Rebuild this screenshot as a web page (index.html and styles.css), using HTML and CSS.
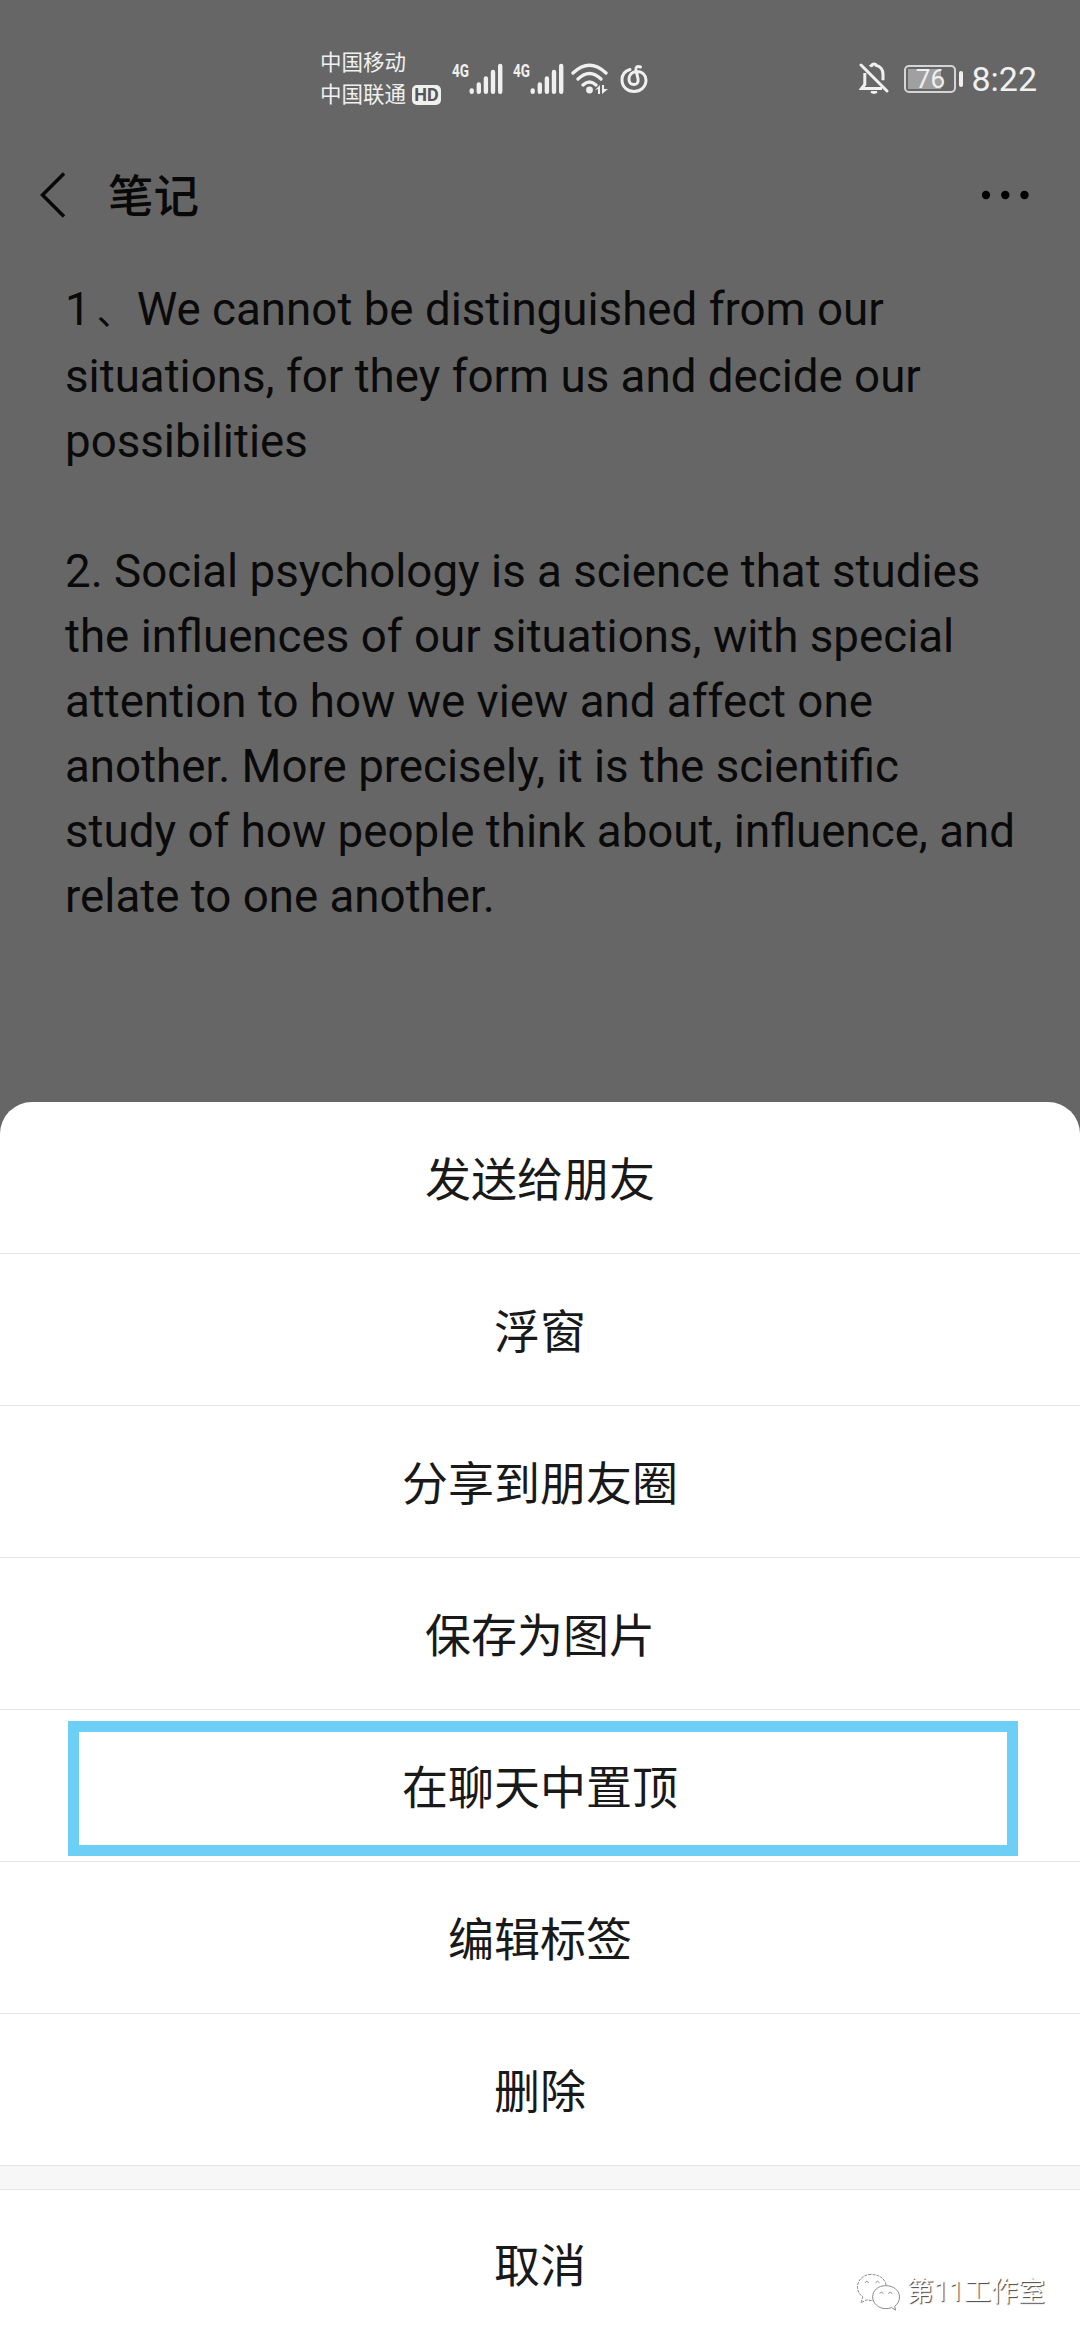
FILE: index.html
```html
<!DOCTYPE html>
<html lang="zh-CN">
<head>
    <meta charset="UTF-8">
    <meta name="viewport" content="width=device-width, initial-scale=1.0">
    <title>笔记</title>
    <link rel="stylesheet" href="styles.css">
</head>
<body>
    <div class="screen">
        <header class="status-bar">
            <div class="carriers">
                <span>中国移动</span>
                <span class="carrier-row">中国联通<b class="hd">HD</b></span>
            </div>
            <svg class="signal" width="52" height="48" viewBox="0 -6 52 48">
                <text class="network" x="1" y="16" textLength="17" lengthAdjust="spacingAndGlyphs">4G</text>
                <path d="M20.7 29.5v1.2M27.8 23.5v7.2M34.9 17.5v13.2M42 11v19.7M49.2 5v25.7" stroke="#f0f0f0" stroke-width="4.4" stroke-linecap="round"/>
            </svg>
            <svg class="signal second" width="52" height="48" viewBox="0 -6 52 48">
                <text class="network" x="1" y="16" textLength="17" lengthAdjust="spacingAndGlyphs">4G</text>
                <path d="M20.7 29.5v1.2M27.8 23.5v7.2M34.9 17.5v13.2M42 11v19.7M49.2 5v25.7" stroke="#f0f0f0" stroke-width="4.4" stroke-linecap="round"/>
            </svg>
            <svg class="wifi" width="38" height="36" viewBox="0 0 38 36" fill="none" stroke="#f0f0f0" stroke-width="3.3" stroke-linecap="round">
                <path d="M2 12Q18.500-3.500 35 12M7 18Q18.500 7 30 18M12 24Q18.500 18 25 24"/>
                <circle cx="18.500" cy="29" r="3.400" fill="#f0f0f0" stroke="none"/>
                <path d="M24 29l5-5v9h-2v-5zM31 24v9l6-5h-4v-4z" fill="#f0f0f0" stroke="none"/>
            </svg>
            <svg class="music" width="28" height="30" viewBox="0 0 28 30" fill="none" stroke="#f0f0f0" stroke-width="3" stroke-linecap="round">
                <path d="M10 5.500C4.500 7 2 11 2 16c0 7 5.500 11.500 12 11.500S26 23 26 16c0-4.500-3.500-8.500-9-8.500-5 0-8 3.500-8 8 0 3 2 5 4.800 5 3 0 4.700-2 4.300-5L16 6c-.5-3 1-4.300 4.500-3"/>
            </svg>
            <svg class="mute" width="30" height="33" viewBox="0 0 30 33" fill="none" stroke="#f0f0f0" stroke-width="3">
                <path d="M2 3l26 26" stroke-linecap="round"/>
                <path d="M11 4.500C12 3.600 12.500 3.200 13 3.200c.4-1.600 3.600-1.600 4 0 4.500 1 7 4.800 7 9v6M5.800 11v11.500l-3.300 4H23"/>
                <path d="M12 30h6l-3 1z" fill="#f0f0f0" stroke-width="2"/>
            </svg>
            <div class="battery"><span>76</span></div>
            <i class="battery-tip"></i>
            <time class="clock">8:22</time>
        </header>

        <nav class="title-bar">
            <svg width="28" height="46" viewBox="0 0 28 46" fill="none" stroke="#080808" stroke-width="3.500">
                <path d="M25 1.500L3.500 23 25 44.500"/>
            </svg>
            <h1>笔记</h1>
            <svg class="more" width="48" height="10" viewBox="0 0 48 10">
                <circle cx="5" cy="5" r="4.200"/>
                <circle cx="24.300" cy="5" r="4.200"/>
                <circle cx="43.500" cy="5" r="4.200"/>
            </svg>
        </nav>

        <main class="note">
            <p>1<span class="pause">、</span>We cannot be distinguished from our<br>situations, for they form us and decide our<br>possibilities</p>
            <p>2. Social psychology is a science that studies<br>the influences of our situations, with special<br>attention to how we view and affect one<br>another. More precisely, it is the scientific<br>study of how people think about, influence, and<br>relate to one another.</p>
        </main>

        <section class="sheet">
            <ul class="actions">
                <li>发送给朋友</li>
                <li>浮窗</li>
                <li>分享到朋友圈</li>
                <li>保存为图片</li>
                <li class="selected">在聊天中置顶</li>
                <li>编辑标签</li>
                <li>删除</li>
            </ul>
            <div class="cancel">取消</div>
        </section>

        <div class="watermark">
            <svg width="44" height="39" viewBox="1 0 45 39" fill="#fff" stroke="#888" stroke-width="1">
                <path d="M15.500 1C7 1 1.500 7 1.500 14c0 4 2 7.500 5.500 10l-2 6 6-3c12 3 20-3 20-13 0-8-7-13-15.500-13z" stroke-dasharray="3 1"/>
                <path d="M30.500 12.500c-8 0-13.500 5-13.500 11.500s6 12 13.500 12c2 0 4-.3 6-1l4 2.500-1-4c3-2 5-5.500 5-9.500 0-6.500-6-11.500-14-11.500z"/>
                <path d="M9 9.500q2-3 4 0M20 9.500q2-3 4 0M24 20.500q2-2.500 4 0M33 20.500q2-2.500 4 0" fill="none"/>
            </svg>
            <span>第11工作室</span>
        </div>
    </div>
</body>
</html>
```
FILE: styles.css
```css
* {
    box-sizing: border-box;
}

body {
    margin: 0;
    font-family: Roboto, "Noto Sans CJK SC", sans-serif;
}

.screen {
    position: relative;
    display: flex;
    flex-direction: column;
    width: 1080px;
    height: 2340px;
    overflow: hidden;
    background: #666;
}

.status-bar {
    display: flex;
    align-items: center;
    height: 156px;
    padding: 1px 43px 0 320px;
    color: #f0f0f0;
}

.carriers {
    display: flex;
    flex-direction: column;
    width: 131px;
    font-size: 21.5px;
    line-height: 32px;
    white-space: nowrap;
}

.carrier-row {
    display: flex;
    align-items: center;
}

.hd {
    width: 29px;
    height: 20px;
    margin-left: 6px;
    border-radius: 5px;
    background: #f0f0f0;
    color: #555;
    font-size: 18px;
    line-height: 20px;
    text-align: center;
}

.signal.second {
    margin-left: 9px;
}

.network {
    fill: #f0f0f0;
    font-size: 19px;
    font-weight: bold;
}

.wifi {
    margin-left: 7px;
}

.music {
    margin-left: 11px;
}

.mute {
    margin-left: auto;
}

.battery {
    width: 52px;
    height: 28px;
    margin-left: 15px;
    padding: 2px;
    border: 2px solid #d5d5d5;
    border-radius: 5px;
}

.battery span {
    display: block;
    height: 20px;
    background: linear-gradient(to right, #a0a0a0 76%, transparent 76%);
    font-size: 26px;
    line-height: 20px;
    text-align: center;
}

.battery-tip {
    width: 4px;
    height: 16px;
    margin-left: 3px;
    border-radius: 2px;
    background: #f0f0f0;
}

.clock {
    margin-left: 8px;
    font-size: 34px;
}

.title-bar {
    display: flex;
    align-items: center;
    height: 78px;
    padding: 0 51px 0 39px;
    color: #080808;
}

.title-bar h1 {
    margin: 0 0 4px 41px;
    font-size: 45.5px;
    font-weight: 500;
}

.more {
    margin-left: auto;
    fill: #000;
}

.note {
    flex: 1;
    padding: 43px 0 0 65px;
    color: #0a0a0a;
    font-size: 45.7px;
    line-height: 65px;
    white-space: nowrap;
}

.note p {
    margin: 0 0 65px;
}

.pause {
    display: inline-block;
    margin: 0 4px 0 6px;
    font-size: 36px;
    line-height: 62px;
}

.sheet {
    height: 1238px;
    border-radius: 32px 32px 0 0;
    background: #fff;
    color: #191919;
    font-size: 46px;
    text-align: center;
}

.actions {
    margin: 0;
    padding: 0;
    list-style: none;
}

.actions li {
    position: relative;
    height: 152px;
    border-bottom: 1px solid #e5e5e5;
    line-height: 156px;
}

/* frame drawn over the row */
.selected::after {
    content: "";
    position: absolute;
    top: 11px;
    left: 68px;
    box-sizing: border-box;
    width: 950px;
    height: 135px;
    border: 11px solid #6dcff6;
}

.cancel {
    height: 174px;
    border-top: 23px solid #f7f7f7;
    box-shadow: inset 0 1px #e5e5e5;
    line-height: 155px;
}

.watermark {
    position: absolute;
    right: 35px;
    bottom: 28px;
    display: flex;
    align-items: center;
    gap: 6px;
    color: #fff;
    font-size: 27px;
    line-height: 40px;
    text-shadow: 1px 1px 1px #444;
}
```
